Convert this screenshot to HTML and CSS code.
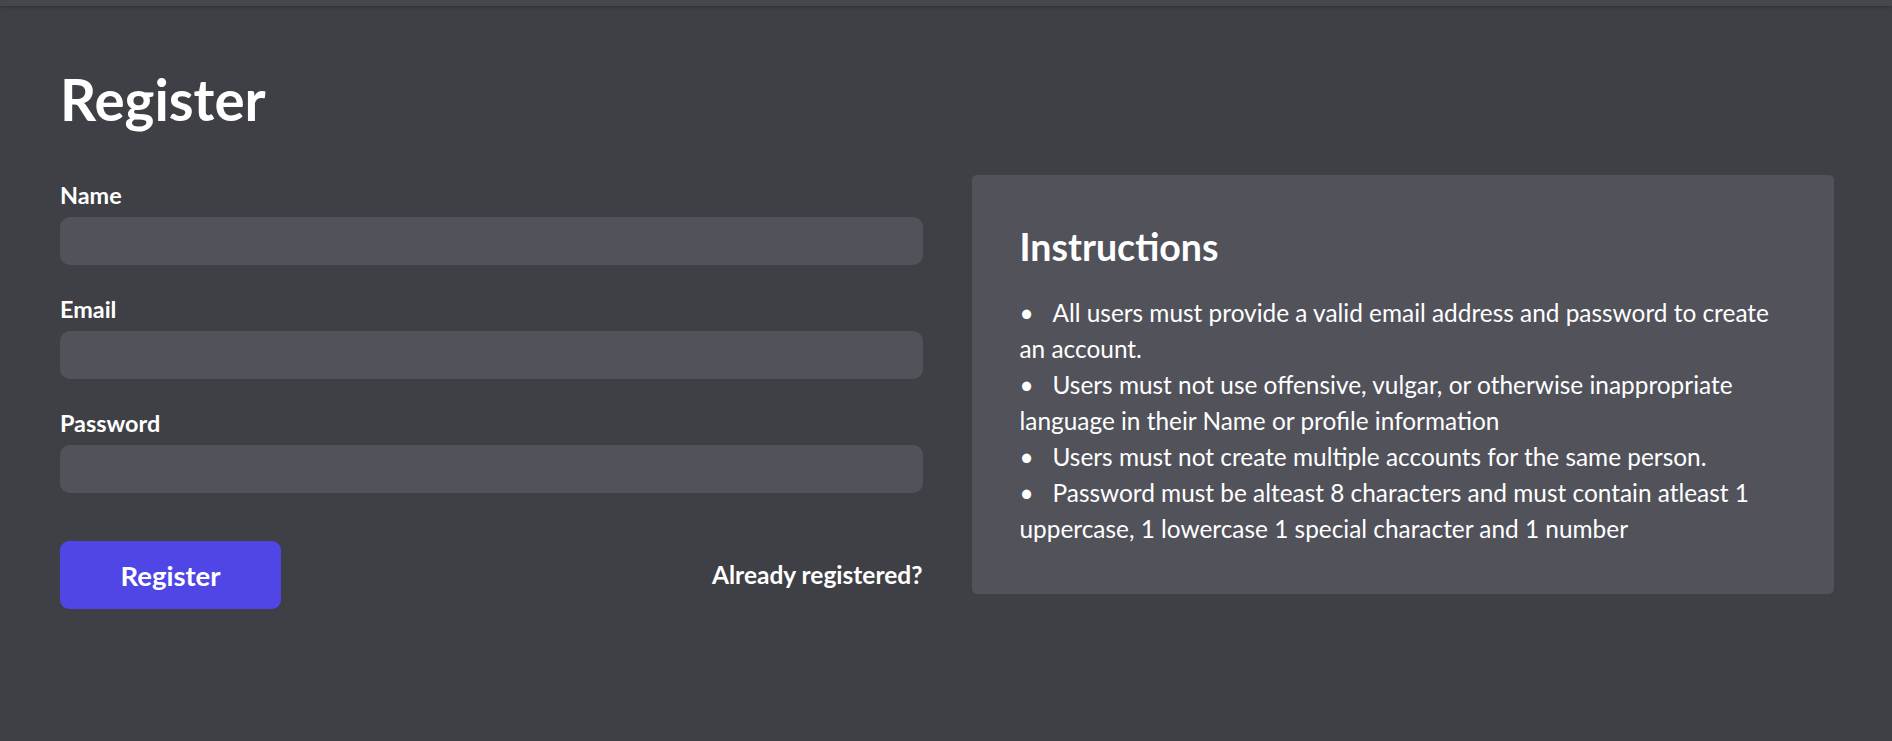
FILE: index.html
```html
<!DOCTYPE html>
<html lang="en">
<head>
<meta charset="utf-8">
<title>Register</title>
<link rel="stylesheet" href="styles.css">
</head>
<body>
<header class="topbar"></header>
<main class="page">
  <h1 class="title">Register</h1>
  <div class="columns">
    <form class="form">
      <div class="field">
        <label class="label" for="name">Name</label>
        <input class="input" id="name" type="text">
      </div>
      <div class="field">
        <label class="label" for="email">Email</label>
        <input class="input" id="email" type="email">
      </div>
      <div class="field field-last">
        <label class="label" for="password">Password</label>
        <input class="input" id="password" type="password">
      </div>
      <div class="actions">
        <button class="btn" type="button">Register</button>
        <a class="link" href="#">Already registered?</a>
      </div>
    </form>
    <section class="card">
      <h2 class="card-title">Instructions</h2>
      <ul class="rules">
        <li>All users must provide a valid email address and password to create an account.</li>
        <li>Users must not use offensive, vulgar, or otherwise inappropriate language in their Name or profile information</li>
        <li>Users must not create multiple accounts for the same person.</li>
        <li>Password must be alteast 8 characters and must contain atleast 1 uppercase, 1 lowercase 1 special character and 1 number</li>
      </ul>
    </section>
  </div>
</main>
</body>
</html>
```
FILE: styles.css
```css
html, body {
  margin: 0;
  padding: 0;
  background: #3f3f46;
  color: #ffffff;
  font-family: Lato, "Open Sans", sans-serif;
  min-height: 100%;
}

.topbar {
  height: 6px;
  background: #46464e;
  box-shadow: 0 1px 3px rgba(0, 0, 0, 0.25);
}

.page {
  padding: 60px 58px 0 60px;
}

.title {
  margin: 0 0 43px 0;
  font-size: 56.5px;
  line-height: 66px;
  font-weight: 700;
}

.columns {
  display: grid;
  grid-template-columns: 1fr 1fr;
  column-gap: 49px;
  align-items: start;
}

.form {
  padding-top: 4px;
  display: flex;
  flex-direction: column;
}

.field {
  display: flex;
  flex-direction: column;
  margin-bottom: 28px;
}

.field-last {
  margin-bottom: 48px;
}

.label {
  font-size: 23.4px;
  line-height: 32px;
  font-weight: 700;
  margin-bottom: 6px;
}

.input {
  height: 48px;
  box-sizing: border-box;
  border: none;
  border-radius: 10px;
  background: #52525b;
  color: #fff;
  padding: 0 14px;
  font-family: inherit;
  font-size: 20px;
  outline: none;
}

.actions {
  display: flex;
  align-items: center;
  justify-content: space-between;
}

.btn {
  width: 221px;
  height: 68px;
  border: none;
  border-radius: 9px;
  background: #4f46e5;
  color: #fff;
  font-family: inherit;
  font-size: 27.5px;
  font-weight: 700;
  cursor: pointer;
}

.link {
  color: #fff;
  text-decoration: none;
  font-size: 24.5px;
  font-weight: 700;
  line-height: 36px;
}

.card {
  background: #52525b;
  border-radius: 5px;
  padding: 50px 48px 47px 48px;
}

.card-title {
  margin: 0 0 26px 0;
  font-size: 37.5px;
  line-height: 44px;
  font-weight: 700;
}

.rules {
  list-style: none;
  margin: 0;
  padding: 0;
  font-size: 24.4px;
  line-height: 36px;
}

.rules li::before {
  content: "\2022";
  display: inline-block;
  width: 33px;
}
```
